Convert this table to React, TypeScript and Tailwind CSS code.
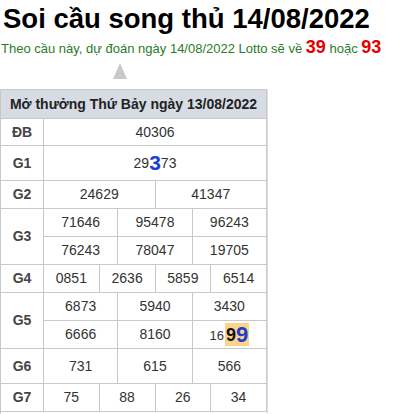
import React from 'react';

const cell = 'flex items-center justify-center border-r border-b border-[#c8c8c8] text-[14px] text-[#333]';
const label = 'flex items-center justify-center border-r border-b border-[#c8c8c8] text-[14px] font-bold text-[#444]';

function Row({ name, values, span }: { name: string; values: string[]; span: string }) {
  return (
    <>
      <div className={label}>{name}</div>
      {values.map((v, i) => (
        <div key={i} className={`${cell} ${span}`}>{v}</div>
      ))}
    </>
  );
}

export default function App() {
  return (
    <div className="w-[394px] h-[414px] bg-white font-['Liberation_Sans',Arial,sans-serif] overflow-hidden">
      <h1 className="text-[27.5px] leading-[34px] font-bold text-black pl-[3px] pt-[2px]">
        Soi cầu song thủ 14/08/2022
      </h1>
      <p className="text-[13px] leading-[22px] text-[#2b7a2b] pl-[1px] whitespace-nowrap">
        Theo cầu này, dự đoán ngày 14/08/2022 Lotto sẽ về{' '}
        <span className="text-[18px] font-bold text-[#e50000]">39</span> hoặc{' '}
        <span className="text-[18px] font-bold text-[#e50000]">93</span>
      </p>

      {/* arrow pointing up at the table */}
      <div className="ml-[113px] mt-[3px] w-0 h-0 border-l-[7px] border-r-[7px] border-b-[16px] border-l-transparent border-r-transparent border-b-[#c8c8c8]" />

      <div className="mt-[10px] w-[267px] grid grid-cols-[43px_repeat(12,1fr)] grid-rows-[29px_27px_35px_28px_28px_28px_28px_28px_28px_35px_28px_28px] border-l border-t border-[#c8c8c8] shadow-[1px_1px_0_#e0e0e0]">
        <div className="col-span-13 flex items-center justify-center border-r border-b border-[#c8c8c8] bg-[#d6dbe4] text-[14px] font-bold text-[#222]">
          Mở thưởng Thứ Bảy ngày 13/08/2022
        </div>

        <Row name="ĐB" values={['40306']} span="col-span-12" />

        <div className={label}>G1</div>
        <div className={`${cell} col-span-12 items-end pb-[6px]`}>
          29<span className="text-[21px] leading-[22px] font-bold text-[#1a3fd0]">3</span>73
        </div>

        <Row name="G2" values={['24629', '41347']} span="col-span-6" />

        <div className={`${label} row-span-2`}>G3</div>
        {['71646', '95478', '96243', '76243', '78047', '19705'].map((v, i) => (
          <div key={i} className={`${cell} col-span-4`}>{v}</div>
        ))}

        <Row name="G4" values={['0851', '2636', '5859', '6514']} span="col-span-3" />

        <div className={`${label} row-span-2`}>G5</div>
        {['6873', '5940', '3430', '6666', '8160'].map((v, i) => (
          <div key={i} className={`${cell} col-span-4`}>{v}</div>
        ))}
        <div className={`${cell} col-span-4`}>
          <span className="text-[13px] mr-[1px] mt-[3px]">16</span>
          <span className="bg-[#fbd38a] px-[1px] h-[23px] flex items-end leading-[22px]">
            <span className="text-[18px] font-bold text-[#111]">9</span>
            <span className="text-[22px] font-bold text-[#1a3fd0]">9</span>
          </span>
        </div>

        <Row name="G6" values={['731', '615', '566']} span="col-span-4" />
        <Row name="G7" values={['75', '88', '26', '34']} span="col-span-3" />
      </div>
    </div>
  );
}
